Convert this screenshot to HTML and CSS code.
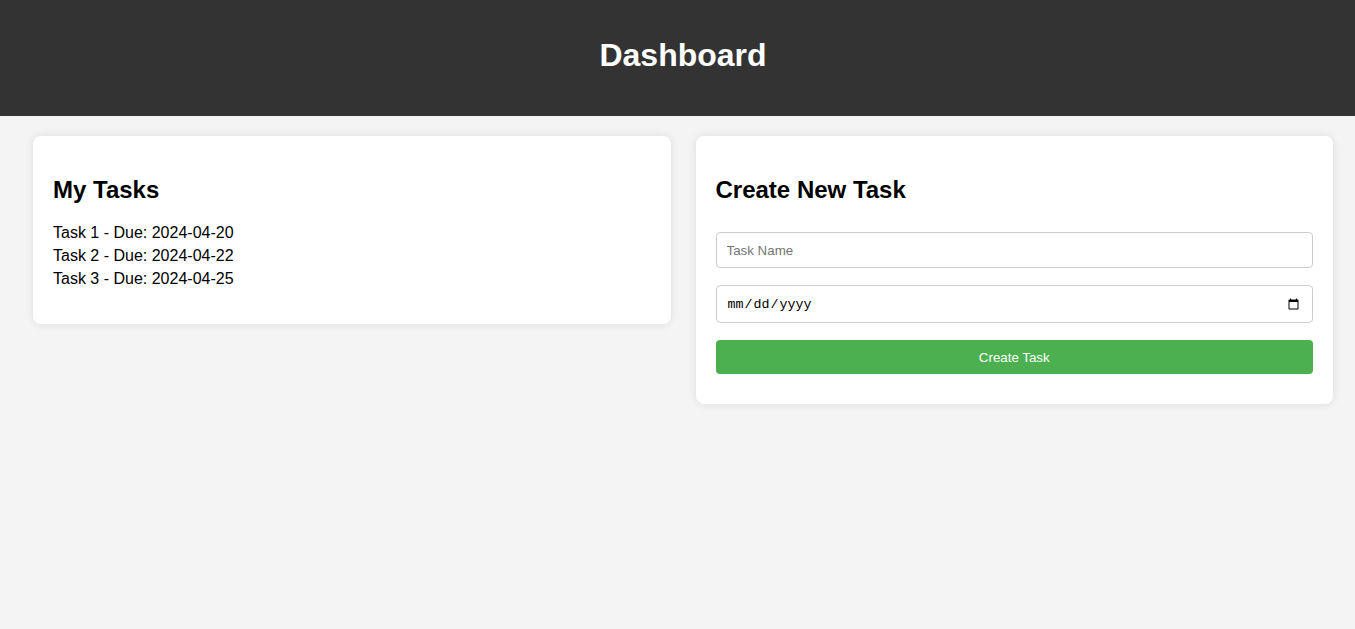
FILE: index.html
```html
<!DOCTYPE html>
<html lang="en">
<head>
<meta charset="utf-8">
<title>Dashboard</title>
<link rel="stylesheet" href="styles.css">
</head>
<body>
<header class="topbar">
  <h1 class="topbar-title">Dashboard</h1>
</header>
<main class="content">
  <section class="card">
    <h2 class="card-title">My Tasks</h2>
    <ul class="task-list">
      <li class="task-item">Task 1 - Due: 2024-04-20</li>
      <li class="task-item">Task 2 - Due: 2024-04-22</li>
      <li class="task-item">Task 3 - Due: 2024-04-25</li>
    </ul>
  </section>
  <section class="card">
    <h2 class="card-title">Create New Task</h2>
    <form class="task-form">
      <input class="field field-text" type="text" placeholder="Task Name">
      <input class="field field-date" type="date">
      <button class="submit" type="button">Create Task</button>
    </form>
  </section>
</main>
</body>
</html>
```
FILE: styles.css
```css
html, body {
  margin: 0;
  padding: 0;
}
body {
  background: #f4f4f4;
  font-family: "Liberation Sans", Arial, sans-serif;
  color: #000;
}
.topbar {
  background: #333;
  color: #fff;
  height: 116px;
  box-sizing: border-box;
  padding: 37px 0 0 11px;
  text-align: center;
}
.topbar-title {
  margin: 0;
  font-size: 32px;
  font-weight: bold;
  line-height: normal;
}
.content {
  display: flex;
  align-items: flex-start;
  gap: 25px;
  padding: 20px 22px 20px 33px;
}
.card {
  flex: 1 1 0;
  min-width: 0;
  background: #fff;
  border-radius: 8px;
  box-shadow: 0 0 10px rgba(0, 0, 0, 0.1);
  padding: 20px;
}
.card-title {
  font-size: 24px;
  font-weight: bold;
  margin: 19.92px 0;
  line-height: normal;
}
.task-list {
  list-style: none;
  margin: 16px 0;
  padding: 0;
  font-size: 16px;
}
.task-item {
  margin-bottom: 4.6px;
  line-height: 18.4px;
}
.task-item:last-child {
  margin-bottom: 0;
}
.task-form {
  display: flex;
  flex-direction: column;
  gap: 17px;
  padding: 8.5px 0 10px;
}
.field {
  box-sizing: border-box;
  width: 100%;
  margin: 0;
  padding: 0 10px;
  border: 1px solid #ccc;
  border-radius: 4px;
  background: #fff;
  font-size: 13.33px;
}
.field-text {
  height: 36px;
  font-family: "Liberation Sans", Arial, sans-serif;
}
.field-date {
  height: 38px;
  font-family: "Liberation Mono", monospace;
}
.field::placeholder {
  color: #757575;
}
.submit {
  box-sizing: border-box;
  width: 100%;
  height: 34px;
  margin: 0;
  border: none;
  border-radius: 4px;
  background: #4caf50;
  color: #fff;
  font-family: "Liberation Sans", Arial, sans-serif;
  font-size: 13.33px;
  cursor: pointer;
}
```
